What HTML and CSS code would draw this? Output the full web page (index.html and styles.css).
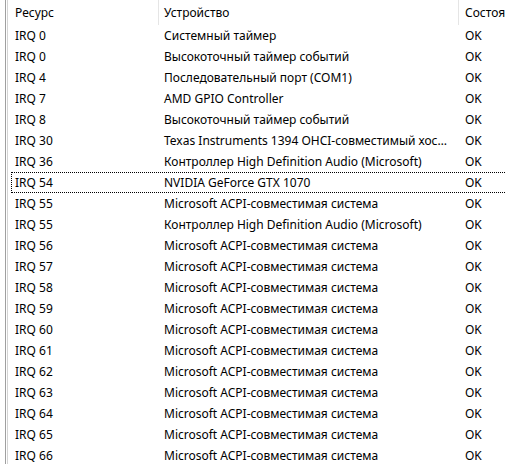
FILE: index.html
```html
<!DOCTYPE html>
<html lang="ru">
<head>
<meta charset="utf-8">
<link rel="stylesheet" href="styles.css">
</head>
<body>
<div class="frame">
  <div class="gutter"></div>
  <div class="list">
    <div class="header">
      <div class="c1">Ресурс</div>
      <div class="c2 sep">Устройство</div>
      <div class="c3 sep">Состояние</div>
    </div>
    <div class="row"><div class="c1">IRQ 0</div><div class="c2">Системный таймер</div><div class="c3">OK</div></div>
    <div class="row"><div class="c1">IRQ 0</div><div class="c2">Высокоточный таймер событий</div><div class="c3">OK</div></div>
    <div class="row"><div class="c1">IRQ 4</div><div class="c2">Последовательный порт (COM1)</div><div class="c3">OK</div></div>
    <div class="row"><div class="c1">IRQ 7</div><div class="c2">AMD GPIO Controller</div><div class="c3">OK</div></div>
    <div class="row"><div class="c1">IRQ 8</div><div class="c2">Высокоточный таймер событий</div><div class="c3">OK</div></div>
    <div class="row"><div class="c1">IRQ 30</div><div class="c2">Texas Instruments 1394 OHCI-совместимый хост-контроллер</div><div class="c3">OK</div></div>
    <div class="row"><div class="c1">IRQ 36</div><div class="c2">Контроллер High Definition Audio (Microsoft)</div><div class="c3">OK</div></div>
    <div class="row focus"><div class="c1">IRQ 54</div><div class="c2">NVIDIA GeForce GTX 1070</div><div class="c3">OK</div></div>
    <div class="row"><div class="c1">IRQ 55</div><div class="c2">Microsoft ACPI-совместимая система</div><div class="c3">OK</div></div>
    <div class="row"><div class="c1">IRQ 55</div><div class="c2">Контроллер High Definition Audio (Microsoft)</div><div class="c3">OK</div></div>
    <div class="row"><div class="c1">IRQ 56</div><div class="c2">Microsoft ACPI-совместимая система</div><div class="c3">OK</div></div>
    <div class="row"><div class="c1">IRQ 57</div><div class="c2">Microsoft ACPI-совместимая система</div><div class="c3">OK</div></div>
    <div class="row"><div class="c1">IRQ 58</div><div class="c2">Microsoft ACPI-совместимая система</div><div class="c3">OK</div></div>
    <div class="row"><div class="c1">IRQ 59</div><div class="c2">Microsoft ACPI-совместимая система</div><div class="c3">OK</div></div>
    <div class="row"><div class="c1">IRQ 60</div><div class="c2">Microsoft ACPI-совместимая система</div><div class="c3">OK</div></div>
    <div class="row"><div class="c1">IRQ 61</div><div class="c2">Microsoft ACPI-совместимая система</div><div class="c3">OK</div></div>
    <div class="row"><div class="c1">IRQ 62</div><div class="c2">Microsoft ACPI-совместимая система</div><div class="c3">OK</div></div>
    <div class="row"><div class="c1">IRQ 63</div><div class="c2">Microsoft ACPI-совместимая система</div><div class="c3">OK</div></div>
    <div class="row"><div class="c1">IRQ 64</div><div class="c2">Microsoft ACPI-совместимая система</div><div class="c3">OK</div></div>
    <div class="row"><div class="c1">IRQ 65</div><div class="c2">Microsoft ACPI-совместимая система</div><div class="c3">OK</div></div>
    <div class="row"><div class="c1">IRQ 66</div><div class="c2">Microsoft ACPI-совместимая система</div><div class="c3">OK</div></div>
  </div>
</div>
</body>
</html>
```
FILE: styles.css
```css
html, body {
  margin: 0;
  padding: 0;
  background: #fff;
  overflow: hidden;
}
body {
  width: 505px;
  height: 464px;
  font-family: "Noto Sans", "Open Sans", sans-serif;
  font-size: 12px;
  color: #000;
}
.frame {
  display: flex;
  height: 464px;
}
.gutter {
  flex: 0 0 11px;
  background:
    linear-gradient(#a0a0a0, #a0a0a0) 5px 0 / 1px 100% no-repeat,
    linear-gradient(#d4d4d4, #d4d4d4) 7px 0 / 1px 100% no-repeat;
}
.list {
  flex: 0 0 600px;
  display: flex;
  flex-direction: column;
}
.header, .row {
  display: flex;
  align-items: center;
  white-space: nowrap;
}
.header {
  height: 25px;
}
.header > div {
  height: 25px;
  line-height: 25px;
}
.row {
  height: 21px;
  line-height: 21px;
}
.c1 {
  flex: 0 0 147px;
  box-sizing: border-box;
  padding-left: 4px;
}
.c2 {
  flex: 0 0 300px;
  box-sizing: border-box;
  padding-left: 6px;
  padding-right: 8px;
  overflow: hidden;
  text-overflow: ellipsis;
}
.c3 {
  flex: 0 0 120px;
  box-sizing: border-box;
  padding-left: 7px;
}
.header .sep {
  border-left: 1px solid #e5e5e5;
}
.header .c2 { padding-left: 5px; }
.header .c3 { padding-left: 6px; }
.focus {
  outline: 1px dotted #000;
  outline-offset: -1px;
}
```
